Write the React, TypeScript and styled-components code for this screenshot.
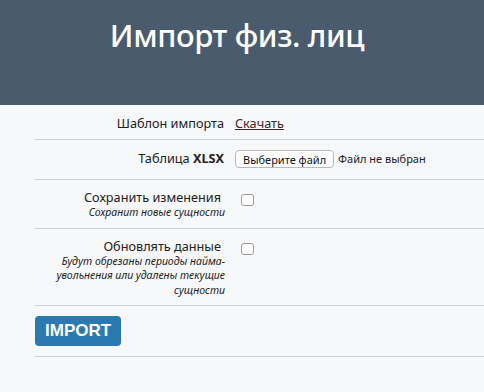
import React from "react";
import styled, { createGlobalStyle } from "styled-components";

const GlobalStyle = createGlobalStyle`
  body {
    margin: 0;
    background: #f7f8fa;
    font-family: "Noto Sans", "Open Sans", sans-serif;
    color: #222;
  }
`;

const Header = styled.div`
  height: 105px;
  background: #4a5b6d;
  box-sizing: border-box;
  padding: 15px 10px 0 0;
  text-align: center;
  h1 {
    margin: 0;
    color: #fff;
    font-size: 31px;
    font-weight: 500;
    letter-spacing: -0.4px;
    line-height: 40px;
  }
`;

const Form = styled.div`
  padding-left: 35px;
`;

const Row = styled.div`
  display: grid;
  grid-template-columns: 190px 1fr;
  column-gap: 10px;
  align-items: start;
  padding: 10px 0 8px;
  border-bottom: 1px solid #d3d4d8;
  font-size: 12.7px;
  line-height: 16px;
`;

const Label = styled.div<{ $gap?: boolean }>`
  text-align: right;
  padding-right: ${(p) => (p.$gap ? "4px" : "1px")};
  line-height: ${(p) => (p.$gap ? "15px" : "16px")};
  b {
    font-weight: 700;
  }
`;

const Hint = styled.div`
  font-size: 10.5px;
  font-style: italic;
  line-height: 14.5px;
  margin-right: -4px;
`;

const Link = styled.a`
  color: #3a2a28;
  text-decoration: underline;
  cursor: pointer;
`;

const FileBox = styled.div`
  display: flex;
  align-items: center;
  gap: 4px;
  font-size: 11px;
  margin-bottom: 3px;
`;

const FileButton = styled.button`
  font-family: inherit;
  font-size: 11px;
  line-height: 13px;
  height: 18px;
  padding: 0 7px;
  background: #fff;
  border: 1px solid #b8b8b8;
  border-radius: 4px;
  color: #111;
`;

const Check = styled.input`
  appearance: none;
  box-sizing: border-box;
  width: 13px;
  height: 12px;
  margin: 4px 0 0 6px;
  background: #fff;
  border: 1px solid #9a9a9a;
  border-radius: 3px;
`;

const ButtonRow = styled.div`
  padding: 10px 0;
  border-bottom: 1px solid #d3d4d8;
`;

const ImportButton = styled.button`
  font-family: "Liberation Sans", Arial, sans-serif;
  font-size: 17px;
  font-weight: 700;
  color: #fff;
  background: #2a79b0;
  border: none;
  border-radius: 4px;
  height: 30px;
  padding: 0 10px;
  cursor: pointer;
`;

export default function App() {
  return (
    <>
      <GlobalStyle />
      <Header>
        <h1>Импорт физ. лиц</h1>
      </Header>
      <Form>
        <Row>
          <Label>Шаблон импорта</Label>
          <div>
            <Link>Скачать</Link>
          </div>
        </Row>
        <Row>
          <Label>
            Таблица <b>XLSX</b>
          </Label>
          <FileBox>
            <FileButton>Выберите файл</FileButton>
            <span>Файл не выбран</span>
          </FileBox>
        </Row>
        <Row>
          <Label $gap>
            Сохранить изменения
            <Hint>Сохранит новые сущности</Hint>
          </Label>
          <div>
            <Check type="checkbox" />
          </div>
        </Row>
        <Row>
          <Label $gap>
            Обновлять данные
            <Hint>
              Будут обрезаны периоды найма-
              <br />
              увольнения или удалены текущие
              <br />
              сущности
            </Hint>
          </Label>
          <div>
            <Check type="checkbox" />
          </div>
        </Row>
        <ButtonRow>
          <ImportButton>IMPORT</ImportButton>
        </ButtonRow>
      </Form>
    </>
  );
}
